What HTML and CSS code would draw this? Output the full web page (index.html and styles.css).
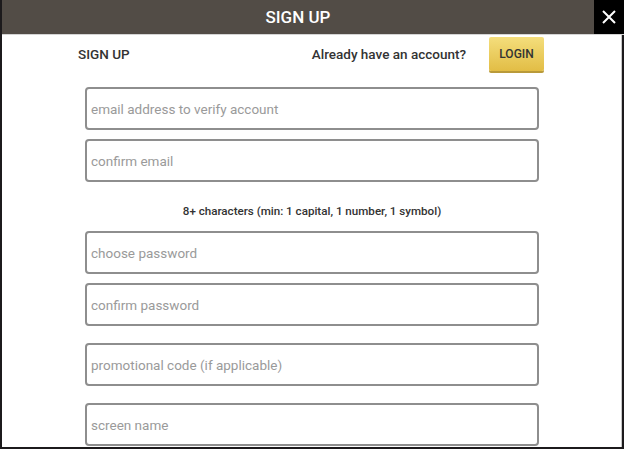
FILE: index.html
```html
<!DOCTYPE html>
<html lang="en">
<head>
    <meta charset="UTF-8">
    <meta name="viewport" content="width=device-width, initial-scale=1.0">
    <title>Sign Up</title>
    <link rel="stylesheet" href="styles.css">
</head>
<body>
    <div class="modal">
        <header class="modal-header">
            <h1>SIGN UP</h1>
            <button class="close-btn" aria-label="Close">
                <svg width="16" height="16" viewBox="0 0 16 16">
                    <path d="M2 2 L14 14 M14 2 L2 14" stroke="#fff" stroke-width="2" fill="none"/>
                </svg>
            </button>
        </header>

        <div class="top-row">
            <h2>SIGN UP</h2>
            <div class="login-group">
                <span>Already have an account?</span>
                <button class="login-btn">LOGIN</button>
            </div>
        </div>

        <form class="signup-form">
            <input type="email" class="field" placeholder="email address to verify account">
            <input type="email" class="field" placeholder="confirm email">
            <p class="hint">8+ characters (min: 1 capital, 1 number, 1 symbol)</p>
            <input type="password" class="field" placeholder="choose password">
            <input type="password" class="field" placeholder="confirm password">
            <input type="text" class="field spaced" placeholder="promotional code (if applicable)">
            <input type="text" class="field spaced" placeholder="screen name">
        </form>
    </div>
</body>
</html>
```

FILE: styles.css
```css
* {
    margin: 0;
    padding: 0;
    box-sizing: border-box;
}

body {
    font-family: Roboto, "Liberation Sans", sans-serif;
    background-color: #1c1a1c; /* dark page behind the modal */
    overflow: hidden;
    height: 449px;
}

.modal {
    margin-left: 2px;
    width: 620px;
    height: 447px;
    background-color: #FFFFFF;
    border-right: 1px solid #c8c8c8;
}

.modal-header {
    display: flex;
    height: 35px;
    border-bottom: 1px solid #d4d4d4;
    margin-right: -3px;
}

.modal-header h1 {
    flex: 1;
    background-color: #524c46;
    color: #FFFFFF;
    font-size: 17px;
    font-weight: 500;
    text-align: center;
    line-height: 34px;
}

.close-btn {
    width: 30px;
    height: 34px;
    background-color: #000000;
    border: none;
    display: flex;
    align-items: center;
    justify-content: center;
    cursor: pointer;
}

.top-row {
    display: flex;
    justify-content: space-between;
    align-items: center;
    padding: 1px 77px 0 76px;
    height: 36px;
}

.top-row h2 {
    font-size: 13.5px;
    font-weight: 500;
    color: #333333;
}

.login-group {
    display: flex;
    align-items: center;
    gap: 23px;
    font-size: 13.5px;
    font-weight: 500;
    color: #333333;
}

.login-btn {
    width: 55px;
    height: 34px;
    border: none;
    border-radius: 2px;
    background: linear-gradient(#f4de7c, #e2bd45);
    box-shadow: 0 2px 0 #b99a3a;
    font-family: inherit;
    font-size: 12px;
    font-weight: 500;
    color: #333333;
    cursor: pointer;
}

.signup-form {
    display: flex;
    flex-direction: column;
    gap: 9px;
    padding: 16px 0 0 83px;
}

.field {
    width: 454px;
    height: 43px;
    border: 2px solid #8e8e8e;
    border-radius: 4px;
    padding: 0 4px;
    font-family: inherit;
    font-size: 13.5px;
    color: #333333;
}

.field::placeholder {
    color: #9a9a9a;
}

.field.spaced {
    margin-top: 8px;
}

.hint {
    width: 454px;
    margin-top: 9px;
    text-align: center;
    font-size: 11.6px;
    font-weight: 500;
    color: #333333;
    line-height: 22px;
}
```
